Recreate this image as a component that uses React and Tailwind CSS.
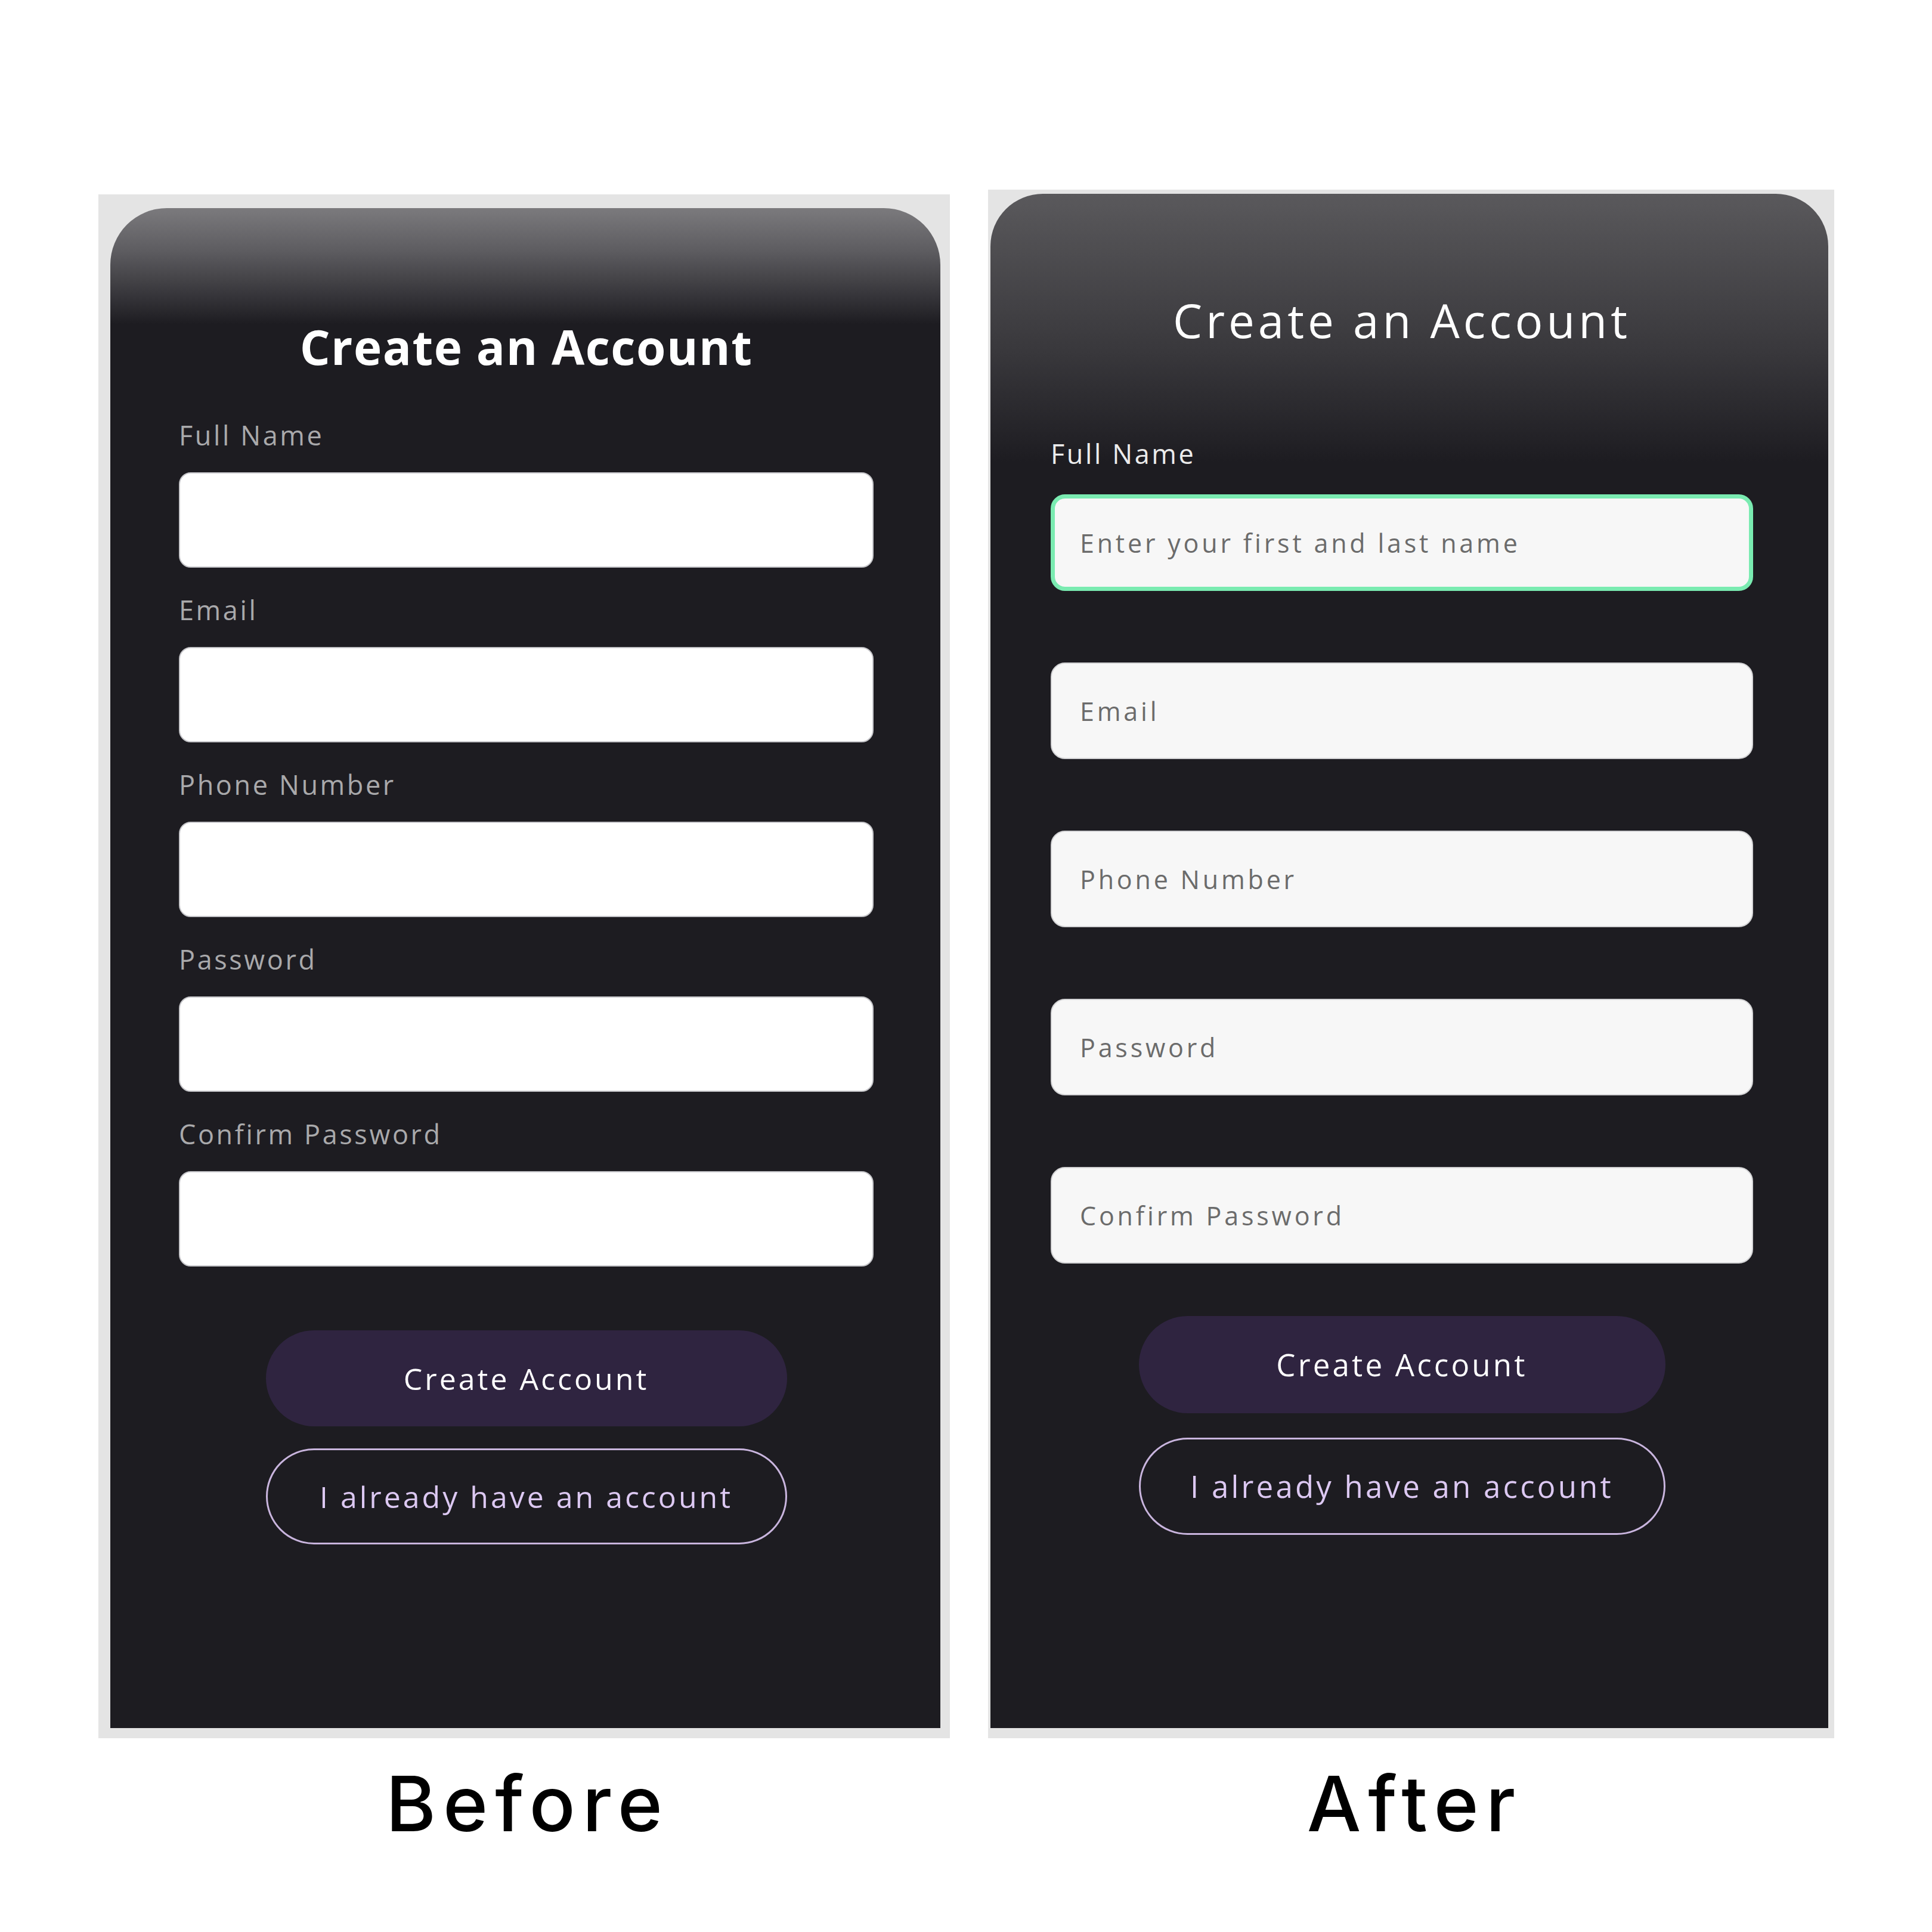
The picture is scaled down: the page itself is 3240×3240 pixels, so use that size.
const FONT = "font-['Open_Sans',sans-serif]"

const BEFORE_FIELDS = ['Full Name', 'Email', 'Phone Number', 'Password', 'Confirm Password']
const AFTER_FIELDS = [
  { label: 'Full Name', placeholder: 'Enter your first and last name', focus: true },
  { placeholder: 'Email' },
  { placeholder: 'Phone Number' },
  { placeholder: 'Password' },
  { placeholder: 'Confirm Password' },
]

function BeforeCard() {
  return (
    <div className="w-[1428px] h-[2589px] bg-[#e4e4e4] pl-[20px] pr-[16px] pt-[23px] pb-[17px]">
      <div className="h-full rounded-t-[95px] bg-[linear-gradient(to_bottom,#7b7a7d_0px,#5e5d61_70px,#1d1c21_195px,#1d1c21_100%)] pl-[115px] pr-[112px] pt-[192px] flex flex-col">
        <h1 className="h-[80px] text-[80px] leading-none font-bold text-white text-center tracking-[1.5px]">Create an Account</h1>
        <div className="mt-[86px] flex flex-col gap-[48px]">
          {BEFORE_FIELDS.map(f => (
            <div key={f} className="flex flex-col">
              <label className="h-[45px] text-[45px] leading-none font-medium text-[#a9a9ab] tracking-[3.6px]">{f}</label>
              <input className="mt-[40px] h-[160px] w-full rounded-[20px] bg-white border-2 border-[#c4c4c8] outline-none" />
            </div>
          ))}
        </div>
        <button className="mt-[107px] mx-auto w-[874px] h-[161px] rounded-full bg-[#2f2440] text-white text-[50px] leading-none font-medium tracking-[4px]">
          Create Account
        </button>
        <button className="mt-[37px] mx-auto w-[874px] h-[161px] rounded-full border-[3px] border-[#c9b5de] text-[#dcc8f2] text-[50px] leading-none font-medium tracking-[4px]">
          I already have an account
        </button>
      </div>
    </div>
  )
}

function AfterCard() {
  return (
    <div className="w-[1419px] h-[2597px] bg-[#e4e4e4] pl-[4px] pr-[10px] pt-[7px] pb-[17px]">
      <div className="h-full rounded-t-[88px] bg-[linear-gradient(to_bottom,#5a595c_0px,#38373b_270px,#1d1c21_450px,#1d1c21_100%)] pl-[101px] pr-[126px] pt-[173px] flex flex-col">
        <h1 className="h-[78px] text-[78px] leading-none font-normal text-white text-center tracking-[6px]">Create an Account</h1>
        <div className="mt-[162px] flex flex-col gap-[120px]">
          {AFTER_FIELDS.map(f => (
            <div key={f.placeholder} className="flex flex-col">
              {f.label && (
                <label className="h-[45px] mb-[46px] text-[45px] leading-none font-medium text-[#ececec] tracking-[3.6px]">{f.label}</label>
              )}
              <input
                placeholder={f.placeholder}
                className={`h-[162px] w-full rounded-[24px] bg-[#f7f7f7] outline-none text-[43px] tracking-[4.8px] text-[#333] placeholder:text-[#6b6b6b] ${
                  f.focus ? 'border-[7px] border-[#7aebb1] pl-[42px]' : 'border-2 border-[#d2d2d4] pl-[47px]'
                }`}
              />
            </div>
          ))}
        </div>
        <button className="mt-[88px] mx-auto w-[883px] h-[163px] rounded-full bg-[#2f2440] text-white text-[51px] leading-none font-medium tracking-[4.2px]">
          Create Account
        </button>
        <button className="mt-[41px] mx-auto w-[883px] h-[163px] rounded-full border-[3px] border-[#c9b5de] text-[#dcc8f2] text-[51px] leading-none font-medium tracking-[4.2px]">
          I already have an account
        </button>
      </div>
    </div>
  )
}

export default function App() {
  return (
    <div className={`w-[3240px] h-[3240px] bg-white flex items-start ${FONT}`}>
      <div className="ml-[165px] mt-[326px] flex flex-col items-center">
        <BeforeCard />
        <div className="mt-[46px] pl-[12px] text-[128px] leading-none font-medium text-black font-['Inter',sans-serif] tracking-[12px]">Before</div>
      </div>
      <div className="ml-[64px] mt-[318px] flex flex-col items-center">
        <AfterCard />
        <div className="mt-[46px] pl-[12px] text-[128px] leading-none font-medium text-black font-['Inter',sans-serif] tracking-[12px]">After</div>
      </div>
    </div>
  )
}
